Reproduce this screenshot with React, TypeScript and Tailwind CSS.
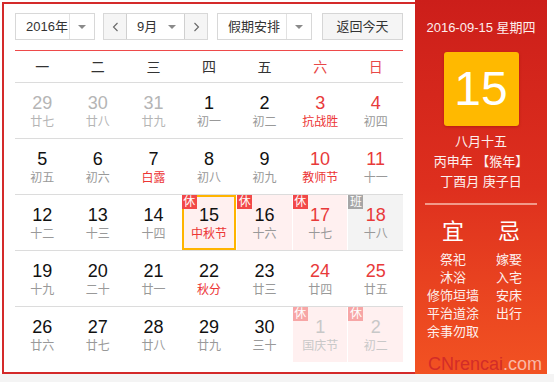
import React from "react";

const FONT = '"Liberation Sans", "Noto Sans CJK SC", sans-serif';

type Cell = {
  n: string;
  l: string;
  numRed?: boolean;
  lunarRed?: boolean;
  other?: boolean;
  badge?: "休" | "班";
  faded?: boolean;
  selected?: boolean;
  bg?: "pink" | "gray";
};

const rows: Cell[][] = [
  [
    { n: "29", l: "廿七", other: true },
    { n: "30", l: "廿八", other: true },
    { n: "31", l: "廿九", other: true },
    { n: "1", l: "初一" },
    { n: "2", l: "初二" },
    { n: "3", l: "抗战胜", numRed: true, lunarRed: true },
    { n: "4", l: "初四", numRed: true },
  ],
  [
    { n: "5", l: "初五" },
    { n: "6", l: "初六" },
    { n: "7", l: "白露", lunarRed: true },
    { n: "8", l: "初八" },
    { n: "9", l: "初九" },
    { n: "10", l: "教师节", numRed: true, lunarRed: true },
    { n: "11", l: "十一", numRed: true },
  ],
  [
    { n: "12", l: "十二" },
    { n: "13", l: "十三" },
    { n: "14", l: "十四" },
    { n: "15", l: "中秋节", lunarRed: true, badge: "休", selected: true, bg: "pink" },
    { n: "16", l: "十六", badge: "休", bg: "pink" },
    { n: "17", l: "十七", numRed: true, badge: "休", bg: "pink" },
    { n: "18", l: "十八", numRed: true, badge: "班", bg: "gray" },
  ],
  [
    { n: "19", l: "十九" },
    { n: "20", l: "二十" },
    { n: "21", l: "廿一" },
    { n: "22", l: "秋分", lunarRed: true },
    { n: "23", l: "廿三" },
    { n: "24", l: "廿四", numRed: true },
    { n: "25", l: "廿五", numRed: true },
  ],
  [
    { n: "26", l: "廿六" },
    { n: "27", l: "廿七" },
    { n: "28", l: "廿八" },
    { n: "29", l: "廿九" },
    { n: "30", l: "三十" },
    { n: "1", l: "国庆节", other: true, badge: "休", faded: true, bg: "pink" },
    { n: "2", l: "初二", other: true, badge: "休", faded: true, bg: "pink" },
  ],
];

const Tri = () => (
  <svg width="8" height="4" viewBox="0 0 8 4">
    <path d="M0 0h8L4 4z" fill="#8a8a8a" />
  </svg>
);

const Chev = ({ dir }: { dir: "l" | "r" }) => (
  <svg width="7" height="10" viewBox="0 0 7 10">
    <polyline
      points={dir === "l" ? "5.5,1 1.5,5 5.5,9" : "1.5,1 5.5,5 1.5,9"}
      fill="none"
      stroke="#666"
      strokeWidth="1.1"
    />
  </svg>
);

function DayCell({ c }: { c: Cell }) {
  const bg =
    c.bg === "pink" ? "bg-[#fff0f0]" : c.bg === "gray" ? "bg-[#f3f3f3]" : "bg-white";
  const numColor = c.other
    ? c.faded
      ? "text-[#c8c8c8]"
      : "text-[#b5b5b5]"
    : c.numRed
    ? "text-[#e83a3a]"
    : "text-[#111]";
  const lunarColor = c.other
    ? c.faded
      ? "text-[#c8c8c8]"
      : "text-[#b5b5b5]"
    : c.lunarRed
    ? "text-[#ec3535]"
    : "text-[#999]";
  const badgeBg =
    c.badge === "班" ? "bg-[#a6a6a6]" : c.faded ? "bg-[#f7a6a6]" : "bg-[#f24848]";
  return (
    <div className={`relative h-[55px] ${bg} flex flex-col items-center pt-[9px]`}>
      {c.selected && <div className="absolute inset-0 border-2 border-[#ffb400]" />}
      {c.badge && (
        <div
          className={`absolute left-0 top-0 z-10 w-[15px] h-[14px] ${badgeBg} text-white text-[12px] leading-[14px] flex items-center justify-center`}
        >
          {c.badge}
        </div>
      )}
      <div className={`text-[18px] leading-[22px] ${numColor}`}>{c.n}</div>
      <div className={`text-[12px] leading-[16px] whitespace-nowrap ${lunarColor}`}>{c.l}</div>
    </div>
  );
}

export default function App() {
  const week = ["一", "二", "三", "四", "五", "六", "日"];
  return (
    <div className="w-[554px] h-[382px] bg-white flex flex-col overflow-hidden" style={{ fontFamily: FONT }}>
      <div className="flex items-start h-[374px]">
        {/* left panel */}
        <div className="ml-[2px] mt-[2px] w-[413px] h-[372px] border-l-2 border-t-2 border-b-2 border-[#d42a2a] pt-[9px] pl-[11px] pr-[12px] bg-white">
          {/* toolbar */}
          <div className="flex h-[27px] text-[13px] text-[#333]">
            <div className="w-[80px] h-[27px] border border-[#d8d8d8] flex bg-white">
              <div className="flex-1 pl-[10px] leading-[25px]">2016年</div>
              <div className="w-[25px] border-l border-[#e2e2e2] flex items-center justify-center">
                <Tri />
              </div>
            </div>
            <div className="ml-[8px] w-[105px] h-[27px] border border-[#d8d8d8] flex">
              <div className="w-[22px] bg-[#f5f5f5] flex items-center justify-center">
                <Chev dir="l" />
              </div>
              <div className="flex-1 border-x border-[#d0d0d0] bg-white flex items-center pl-[10px] pr-[8px]">
                <span className="flex-1 leading-[25px]">9月</span>
                <Tri />
              </div>
              <div className="w-[22px] bg-[#f5f5f5] flex items-center justify-center">
                <Chev dir="r" />
              </div>
            </div>
            <div className="ml-[9px] w-[95px] h-[27px] border border-[#d8d8d8] flex bg-white">
              <div className="flex-1 pl-[10px] leading-[25px] whitespace-nowrap">假期安排</div>
              <div className="w-[25px] border-l border-[#e2e2e2] flex items-center justify-center">
                <Tri />
              </div>
            </div>
            <div className="ml-[10px] w-[81px] h-[27px] border border-[#d6d6d6] bg-[#f5f5f5] flex items-center justify-center leading-[25px]">
              返回今天
            </div>
          </div>
          {/* red line */}
          <div className="mt-[10px] h-px bg-[#ee4a4a]" />
          {/* header */}
          <div className="grid grid-cols-7 gap-x-px h-[32px] border-b border-[#dcdcdc] items-center">
            {week.map((w, i) => (
              <div
                key={w}
                className={`text-center text-[14px] leading-[20px] ${i >= 5 ? "text-[#e84848]" : "text-[#333]"}`}
              >
                {w}
              </div>
            ))}
          </div>
          {/* rows */}
          {rows.map((r, ri) => (
            <div
              key={ri}
              className={`grid grid-cols-7 gap-x-px ${ri < rows.length - 1 ? "border-b border-[#dcdcdc]" : ""}`}
            >
              {r.map((c, ci) => (
                <DayCell key={ci} c={c} />
              ))}
            </div>
          ))}
        </div>
        {/* right panel */}
        <div className="relative w-[132px] h-[374px] bg-linear-to-b from-[#cc1e1a] via-[#de2f1e] to-[#f25222] flex flex-col items-center pt-[18px] text-white overflow-hidden">
          <div className="text-[13px] leading-[20px] whitespace-nowrap text-[#fdeeee]">2016-09-15 星期四</div>
          <div className="mt-[14px] w-[75px] h-[74px] rounded-[3px] bg-[#ffb900] shadow-[0_1px_3px_rgba(120,0,0,0.35)] flex items-center justify-center">
            <span className="text-[48px] leading-none font-light text-white" style={{ fontFamily: '"Liberation Sans", Roboto, sans-serif' }}>
              15
            </span>
          </div>
          <div className="mt-[6px] flex flex-col items-center text-[13px] leading-[20px] text-[#fdf0ee] whitespace-nowrap">
            <div>八月十五</div>
            <div>丙申年 【猴年】</div>
            <div>丁酉月 庚子日</div>
          </div>
          <div className="mt-[11px] w-[112px] h-[2px] bg-[#f29a8a]" />
          <div className="mt-[13px] w-full flex">
            <div className="w-[76px] flex flex-col items-center">
              <div className="text-[22px] leading-[28px]">宜</div>
              <div className="mt-[5px] flex flex-col items-center text-[13px] leading-[18px] whitespace-nowrap text-[#fdf0ee]">
                <div>祭祀</div>
                <div>沐浴</div>
                <div>修饰垣墙</div>
                <div>平治道涂</div>
                <div>余事勿取</div>
              </div>
            </div>
            <div className="w-[36px] flex flex-col items-center">
              <div className="text-[22px] leading-[28px]">忌</div>
              <div className="mt-[5px] flex flex-col items-center text-[13px] leading-[18px] whitespace-nowrap text-[#fdf0ee]">
                <div>嫁娶</div>
                <div>入宅</div>
                <div>安床</div>
                <div>出行</div>
              </div>
            </div>
          </div>
          <div className="absolute right-[5px] bottom-0 text-[18px] leading-[19px] whitespace-nowrap">
            <span className="text-[#d32c28]">CNrencai</span>
            <span className="text-[#f9b9a6]">.com</span>
          </div>
        </div>
      </div>
      <div className="flex-1 bg-[#f4f4f4]" />
    </div>
  );
}
